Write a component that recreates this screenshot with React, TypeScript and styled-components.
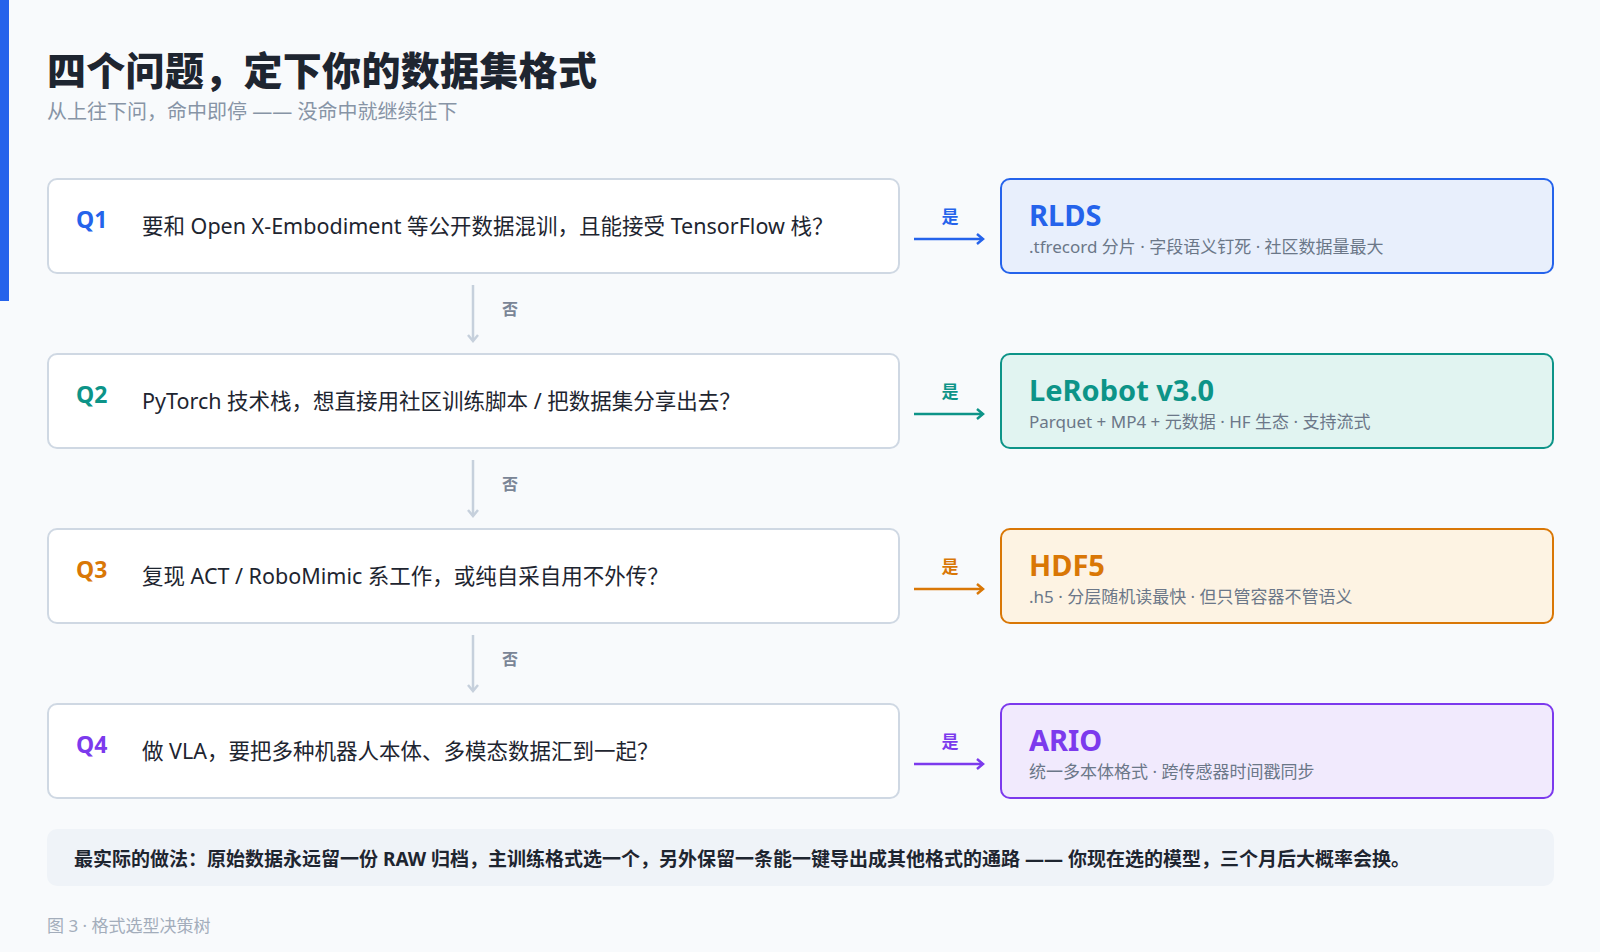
import React from "react";
import styled, { createGlobalStyle } from "styled-components";

const Global = createGlobalStyle`
  body { margin: 0; background: #f8fafc; font-family: "Noto Sans", "Noto Sans CJK SC", sans-serif; }
`;

const Page = styled.div`
  position: relative;
  width: 1600px;
  height: 952px;
  padding: 42px 0 0 47px;
  box-sizing: border-box;
`;
const Accent = styled.div`
  position: absolute; left: 0; top: 0; width: 9px; height: 301px; background: #2563eb;
`;
const Title = styled.h1`
  margin: 0; font-size: 39px; line-height: 56px; font-weight: 900; color: #1e2530; letter-spacing: 0.3px;
`;
const Sub = styled.div`
  font-size: 20px; line-height: 28px; color: #8794a6; margin-top: 0px;
`;
const Flow = styled.div`
  margin-top: 52px;
  display: grid;
  grid-template-columns: 853px 100px 554px;
`;
const QBox = styled.div`
  height: 96px; box-sizing: border-box; background: #fff; border: 2px solid #cfd8e3; border-radius: 10px;
  display: flex; align-items: center; padding: 0 0 4px 27px;
`;
const QLabel = styled.span<{ c: string }>`
  font-size: 23px; font-weight: 700; color: ${p => p.c}; width: 66px; margin-top: -10px;
`;
const QText = styled.span`
  font-size: 21.5px; color: #1e2530;
`;
const Yes = styled.div<{ c: string }>`
  display: flex; flex-direction: column; align-items: center; justify-content: center; color: ${p => p.c};
  font-size: 17px; font-weight: 700; padding-bottom: 4px;
  span { margin-bottom: 4px; }
`;
const ABox = styled.div<{ c: string; bg: string }>`
  height: 96px; box-sizing: border-box; background: ${p => p.bg}; border: 2px solid ${p => p.c}; border-radius: 10px;
  padding: 16px 0 0 27px;
`;
const ATitle = styled.div<{ c: string }>`
  font-size: 29px; font-weight: 700; color: ${p => p.c}; line-height: 38px;
`;
const ADesc = styled.div`
  font-size: 17px; color: #6b7788; line-height: 24px; margin-top: 1px;
`;
const Conn = styled.div`
  grid-column: 1 / 4; height: 79px; display: flex; align-items: center; padding-left: 419px; gap: 22px;
  color: #7a8596; font-size: 16px; font-weight: 700;
  span { margin-top: -12px; }
`;
const Note = styled.div`
  margin-top: 30px; width: 1507px; height: 57px; box-sizing: border-box; background: #eff3f8; border-radius: 10px;
  display: flex; align-items: center; padding-left: 27px; font-size: 19px; font-weight: 700; color: #1e2530;
`;
const Caption = styled.div`
  margin-top: 26px; font-size: 17px; color: #a3adbb;
`;

const rows = [
  { q: "Q1", t: "要和 Open X-Embodiment 等公开数据混训，且能接受 TensorFlow 栈？", c: "#2563eb", bg: "#e8effc", a: "RLDS", d: ".tfrecord 分片 · 字段语义钉死 · 社区数据量最大" },
  { q: "Q2", t: "PyTorch 技术栈，想直接用社区训练脚本 / 把数据集分享出去？", c: "#0d9488", bg: "#e1f4f1", a: "LeRobot v3.0", d: "Parquet + MP4 + 元数据 · HF 生态 · 支持流式" },
  { q: "Q3", t: "复现 ACT / RoboMimic 系工作，或纯自采自用不外传？", c: "#d97706", bg: "#fdf3e3", a: "HDF5", d: ".h5 · 分层随机读最快 · 但只管容器不管语义" },
  { q: "Q4", t: "做 VLA，要把多种机器人本体、多模态数据汇到一起？", c: "#7c3aed", bg: "#f1eafd", a: "ARIO", d: "统一多本体格式 · 跨传感器时间戳同步" },
];

const Arrow = ({ c }: { c: string }) => (
  <svg width="72" height="14" viewBox="0 0 72 14">
    <line x1="0" y1="7" x2="69" y2="7" stroke={c} strokeWidth="2.5" />
    <polyline points="63,2 69,7 63,12" fill="none" stroke={c} strokeWidth="2.5" />
  </svg>
);
const Down = () => (
  <svg width="14" height="58" viewBox="0 0 14 58">
    <line x1="7" y1="0" x2="7" y2="56" stroke="#c6d0dc" strokeWidth="2.5" />
    <polyline points="2,50 7,56 12,50" fill="none" stroke="#c6d0dc" strokeWidth="2.5" />
  </svg>
);

export default function App() {
  return (
    <Page>
      <Global />
      <Accent />
      <Title>四个问题，定下你的数据集格式</Title>
      <Sub>从上往下问，命中即停 —— 没命中就继续往下</Sub>
      <Flow>
        {rows.map((r, i) => (
          <React.Fragment key={r.q}>
            <QBox>
              <QLabel c={r.c}>{r.q}</QLabel>
              <QText>{r.t}</QText>
            </QBox>
            <Yes c={r.c}>
              <span>是</span>
              <Arrow c={r.c} />
            </Yes>
            <ABox c={r.c} bg={r.bg}>
              <ATitle c={r.c}>{r.a}</ATitle>
              <ADesc>{r.d}</ADesc>
            </ABox>
            {i < 3 && (
              <Conn>
                <Down />
                <span>否</span>
              </Conn>
            )}
          </React.Fragment>
        ))}
      </Flow>
      <Note>最实际的做法：原始数据永远留一份 RAW 归档，主训练格式选一个，另外保留一条能一键导出成其他格式的通路 —— 你现在选的模型，三个月后大概率会换。</Note>
      <Caption>图 3 · 格式选型决策树</Caption>
    </Page>
  );
}
